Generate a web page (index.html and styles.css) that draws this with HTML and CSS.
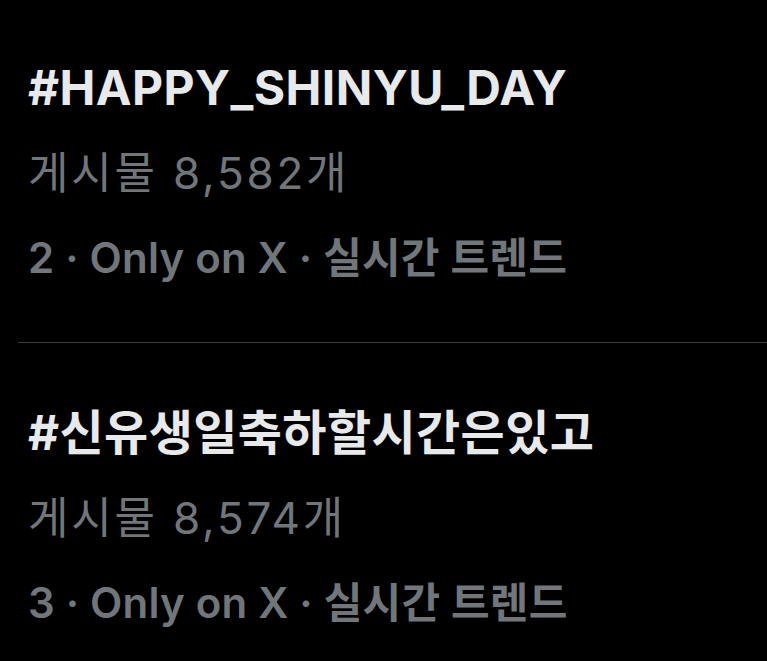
FILE: index.html
```html
<!DOCTYPE html>
<html lang="ko">
  <head>
    <meta charset="UTF-8">
    <meta name="viewport" content="width=device-width, initial-scale=1.0">
    <title>트렌드</title>
    <link rel="stylesheet" href="styles.css">
  </head>
  <body>
    <div class="trends">
      <div class="trend">
        <div class="trend-name">#HAPPY_SHINYU_DAY</div>
        <div class="trend-count">게시물 8,582개</div>
        <div class="trend-meta">2 · Only on X · 실시간 트렌드</div>
      </div>
      <div class="trend">
        <div class="trend-name">#신유생일축하할시간은있고</div>
        <div class="trend-count">게시물 8,574개</div>
        <div class="trend-meta">3 · Only on X · 실시간 트렌드</div>
      </div>
    </div>
  </body>
</html>
```

FILE: styles.css
```css
:root {
  --background: #000;
  --foreground: #e7e9ea;
  --muted: #71767b;
  --border: #3a3d40;
}

body {
  margin: 0;
  background-color: var(--background);
  font-family: Inter, "Noto Sans CJK KR", sans-serif;
}

.trends {
  padding-left: 18px;
}

.trend {
  padding: 58px 0 56px 10px;
}

.trend + .trend {
  border-top: 1px solid var(--border);
  padding-top: 60px;
}

.trend-name {
  color: var(--foreground);
  font-size: 48px;
  font-weight: 700;
  letter-spacing: 0.4px;
  line-height: 60px;
}

.trend-count {
  color: var(--muted);
  font-size: 44px;
  letter-spacing: 2.8px;
  line-height: 56px;
  margin-top: 27px;
}

.trend-meta {
  color: var(--muted);
  font-size: 42px;
  font-weight: 600;
  letter-spacing: 0.2px;
  line-height: 56px;
  margin-top: 29px;
}
```
